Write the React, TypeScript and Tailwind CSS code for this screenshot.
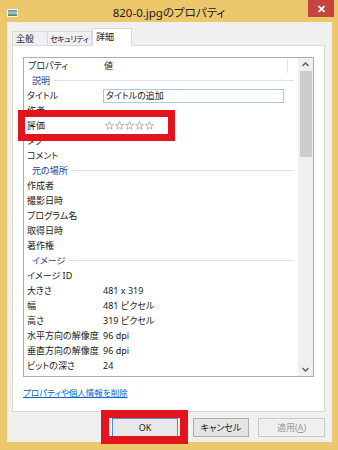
import React from "react";

type Row =
  | { kind: "group"; label: string }
  | { kind: "row"; label: string; value?: string; input?: string; stars?: boolean };

const rows: Row[] = [
  { kind: "group", label: "説明" },
  { kind: "row", label: "タイトル", input: "タイトルの追加" },
  { kind: "row", label: "作者" },
  { kind: "row", label: "評価", stars: true },
  { kind: "row", label: "タグ" },
  { kind: "row", label: "コメント" },
  { kind: "group", label: "元の場所" },
  { kind: "row", label: "作成者" },
  { kind: "row", label: "撮影日時" },
  { kind: "row", label: "プログラム名" },
  { kind: "row", label: "取得日時" },
  { kind: "row", label: "著作権" },
  { kind: "group", label: "イメージ" },
  { kind: "row", label: "イメージ ID" },
  { kind: "row", label: "大きさ", value: "481 x 319" },
  { kind: "row", label: "幅", value: "481 ピクセル" },
  { kind: "row", label: "高さ", value: "319 ピクセル" },
  { kind: "row", label: "水平方向の解像度", value: "96 dpi" },
  { kind: "row", label: "垂直方向の解像度", value: "96 dpi" },
  { kind: "row", label: "ビットの深さ", value: "24" },
];

const Star = () => (
  <svg width="9" height="9" viewBox="0 0 10 10">
    <polygon
      points="5,0.6 6.2,3.7 9.5,3.8 6.9,5.9 7.8,9.2 5,7.3 2.2,9.2 3.1,5.9 0.5,3.8 3.8,3.7"
      fill="none"
      stroke="#a8a8a8"
      strokeWidth="0.9"
    />
  </svg>
);

const Chevron = ({ down }: { down?: boolean }) => (
  <svg width="7" height="5" viewBox="0 0 7 5" className={down ? "rotate-180" : ""}>
    <polyline points="0.5,4 3.5,1 6.5,4" fill="none" stroke="#5a5a5a" strokeWidth="1.3" />
  </svg>
);

const PropertyRow = ({ row }: { row: Row }) => {
  if (row.kind === "group") {
    return (
      <div className="flex items-center h-[15px] pl-[8px] pr-[4px]">
        <span className="text-[#1f3d92] leading-[15px]">{row.label}</span>
        <div className="flex-1 h-px bg-[#d8e2ea] ml-[3px]" />
      </div>
    );
  }
  return (
    <div className="flex items-center h-[15px] pl-[3px]">
      <span className="w-[76px] shrink-0 leading-[15px] whitespace-nowrap text-[#1a1a1a]">
        {row.label}
      </span>
      {row.input && (
        <div className="w-[181px] h-[14px] border border-[#a9c8e2] leading-[12px] pl-[2px] text-[#1a1a1a]">
          {row.input}
        </div>
      )}
      {row.stars && (
        <div className="flex gap-[1px] pl-[2px]">
          {[0, 1, 2, 3, 4].map((i) => (
            <Star key={i} />
          ))}
        </div>
      )}
      {row.value && <span className="leading-[15px] text-[#1a1a1a]">{row.value}</span>}
    </div>
  );
};

export default function App() {
  return (
    <div className="relative w-[338px] h-[450px] bg-[#ecc76c] flex flex-col overflow-hidden font-[Noto_Sans,Noto_Sans_CJK_JP,sans-serif] [font-feature-settings:'palt']">
      {/* title bar */}
      <div className="h-[22px] flex items-start shrink-0">
        <div className="w-[30px] pl-[7px] pt-[9px]">
          <div className="w-[11px] h-[8px] border border-[#f4f4f4] bg-gradient-to-b from-[#5d8fb8] via-[#a8c6d8] to-[#4d7b4a]" />
        </div>
        <div className="flex-1 text-center text-[11.5px] leading-[16px] pt-[5px] text-[#222] whitespace-nowrap">
          820-0.jpgのプロパティ
        </div>
        <div className="w-[30px]">
          <div className="w-[26px] h-[17px] bg-[#c7433f] flex items-center justify-center text-white text-[11px] font-bold leading-none">
            ✕
          </div>
        </div>
      </div>

      {/* dialog body */}
      <div className="ml-[7px] mr-[6px] h-[420px] bg-[#f0f0f0] flex flex-col shrink-0">
        {/* tabs */}
        <div className="h-[23px] flex items-end pl-[5px] text-[9px] text-[#1a1a1a] whitespace-nowrap relative z-10">
          <div className="w-[36px] h-[14px] border border-[#d9d9d9] border-b-0 bg-[#f0f0f0] pl-[3px] leading-[13px]">
            全般
          </div>
          <div className="w-[44px] h-[14px] border border-[#d9d9d9] border-b-0 border-l-0 bg-[#f0f0f0] pl-[2px] leading-[13px] text-[8px] tracking-[-0.5px]">
            セキュリティ
          </div>
          <div className="w-[40px] h-[18px] -mb-px border border-[#d9d9d9] border-b-0 bg-white pl-[3px] leading-[15px]">
            詳細
          </div>
        </div>

        {/* panel */}
        <div className="ml-[5px] w-[313px] h-[367px] bg-white border border-[#d9d9d9] pl-[10px] pt-[11px] text-[9px]">
          <div className="w-[291px] h-[320px] border border-[#adadad] flex">
            <div className="flex-1 flex flex-col">
              <div className="flex items-center h-[15px] pl-[4px]">
                <span className="w-[76px] leading-[15px] text-[#1a1a1a]">プロパティ</span>
                <span className="leading-[15px] text-[#1a1a1a]">値</span>
                <div className="flex-1" />
                <div className="w-px h-[15px] bg-[#e5e5e5] mr-[10px]" />
              </div>
              {rows.map((row, i) => (
                <PropertyRow key={i} row={row} />
              ))}
            </div>
            {/* scrollbar */}
            <div className="w-[15px] bg-[#f0f0f0] flex flex-col">
              <div className="h-[13px] flex items-center justify-center">
                <Chevron />
              </div>
              <div className="h-[86px] ml-[2px] mr-[1px] bg-[#cdcdcd]" />
              <div className="flex-1" />
              <div className="h-[13px] flex items-center justify-center">
                <Chevron down />
              </div>
            </div>
          </div>
          <div className="mt-[8px] w-fit text-[8.5px] leading-[15px] text-[#0066cc] underline whitespace-nowrap">
            プロパティや個人情報を削除
          </div>
        </div>

        {/* buttons */}
        <div className="flex mt-[6px] text-[9px]">
          <div className="ml-[105px] w-[66px] h-[19px] border border-[#4c8fd0] bg-[#e8e8e8] flex items-center justify-center text-[#1a1a1a]">
            OK
          </div>
          <div className="ml-[15px] w-[56px] h-[19px] border border-[#adadad] bg-[#e5e5e5] flex items-center justify-center text-[#1a1a1a]">
            キャンセル
          </div>
          <div className="ml-[9px] w-[67px] h-[19px] border border-[#c8c8c8] bg-[#efefef] flex items-center justify-center text-[#9a9a9a]">
            適用(<span className="underline">A</span>)
          </div>
        </div>
      </div>

      {/* annotation boxes */}
      <div className="absolute left-[18px] top-[110px] w-[157px] h-[31px] border-[7px] border-[#e2151f]" />
      <div className="absolute left-[101px] top-[410px] w-[87px] h-[34px] border-[8px] border-[#e2151f]" />
    </div>
  );
}
